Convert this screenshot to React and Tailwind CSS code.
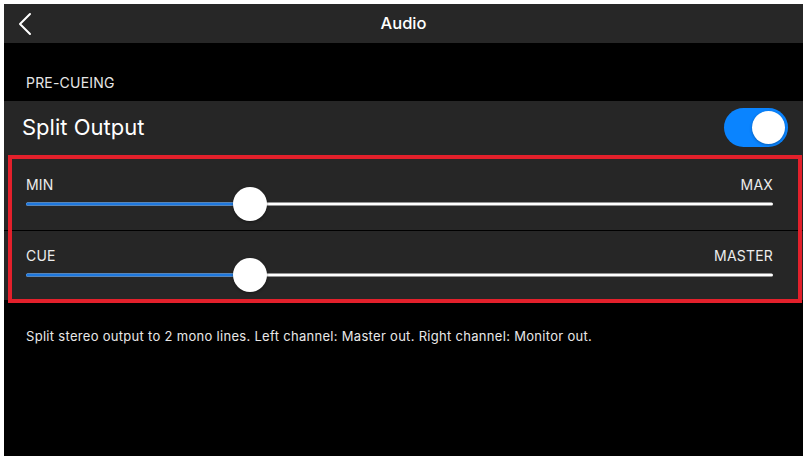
import React from "react";

function Slider({ pct }) {
  return (
    <div className="relative -mt-[5px] h-[34px] w-full">
      <div className="absolute left-0 right-0 top-1/2 h-[3px] -translate-y-1/2 rounded-full bg-white" />
      <div
        className="absolute left-0 top-1/2 h-[3px] -translate-y-1/2 rounded-full bg-[#1e78de]"
        style={{ width: `${pct}%` }}
      />
      <div
        className="absolute top-1/2 h-[34px] w-[34px] -translate-x-1/2 -translate-y-1/2 rounded-full bg-white shadow-[0_1px_3px_rgba(0,0,0,0.4)]"
        style={{ left: `${pct}%` }}
      />
    </div>
  );
}

export default function App() {
  return (
    <div
      className="h-[456px] w-[810px] overflow-hidden bg-white pl-[4px] pr-[7px] pt-[4px]"
      style={{ fontFamily: "Inter, 'Noto Sans', sans-serif" }}
    >
      <div className="flex h-full flex-col bg-black text-white">
        {/* Header */}
        <div className="relative flex h-[39px] shrink-0 items-center justify-center bg-[#272727]">
          <svg
            className="absolute left-[13px] top-[8px]"
            width="16"
            height="24"
            viewBox="0 0 16 24"
            fill="none"
          >
            <path
              d="M13 2 L3 12 L13 22"
              stroke="white"
              strokeWidth="2"
              strokeLinecap="round"
              strokeLinejoin="round"
            />
          </svg>
          <span className="text-[16.5px] font-medium">Audio</span>
        </div>

        {/* Section label */}
        <div className="flex h-[58px] shrink-0 items-end pb-[10px] pl-[22px]">
          <span className="text-[14px] leading-[16px] tracking-[0.2px] text-[#e6e6e6]">PRE-CUEING</span>
        </div>

        {/* Split Output row */}
        <div className="flex h-[52px] shrink-0 items-center justify-between bg-[#262626] pl-[18px] pr-[15px]">
          <span className="text-[22px] leading-[26px] text-white">Split Output</span>
          <div className="flex h-[39px] w-[64px] items-center justify-end rounded-full bg-[#0a84ff] p-[3px]">
            <div className="h-[33px] w-[33px] rounded-full bg-white shadow-[0_1px_3px_rgba(0,0,0,0.3)]" />
          </div>
        </div>

        {/* Slider rows with annotation box */}
        <div className="relative shrink-0">
          <div className="flex h-[77px] flex-col justify-end bg-[#262626] pb-[9px] pl-[22px] pr-[30px]">
            <div className="flex h-[14px] items-center justify-between text-[14px] leading-[14px] tracking-[0.2px] text-[#ececec]">
              <span>MIN</span>
              <span>MAX</span>
            </div>
            <Slider pct={30} />
          </div>
          <div className="h-px bg-black" />
          <div className="flex h-[69px] flex-col justify-end bg-[#262626] pb-[8px] pl-[22px] pr-[30px]">
            <div className="flex h-[14px] items-center justify-between text-[14px] leading-[14px] tracking-[0.2px] text-[#ececec]">
              <span>CUE</span>
              <span>MASTER</span>
            </div>
            <Slider pct={30} />
          </div>
          <div className="pointer-events-none absolute bottom-[-3px] left-[4px] right-[1px] top-[2px] border-[4px] border-[#e3202b]" />
        </div>

        {/* Description */}
        <div className="pl-[22px] pt-[27px]">
          <p className="text-[13px] leading-[18px] tracking-[0.3px] text-[#e8e8e8]">
            Split stereo output to 2 mono lines. Left channel: Master out. Right channel: Monitor out.
          </p>
        </div>
      </div>
    </div>
  );
}
